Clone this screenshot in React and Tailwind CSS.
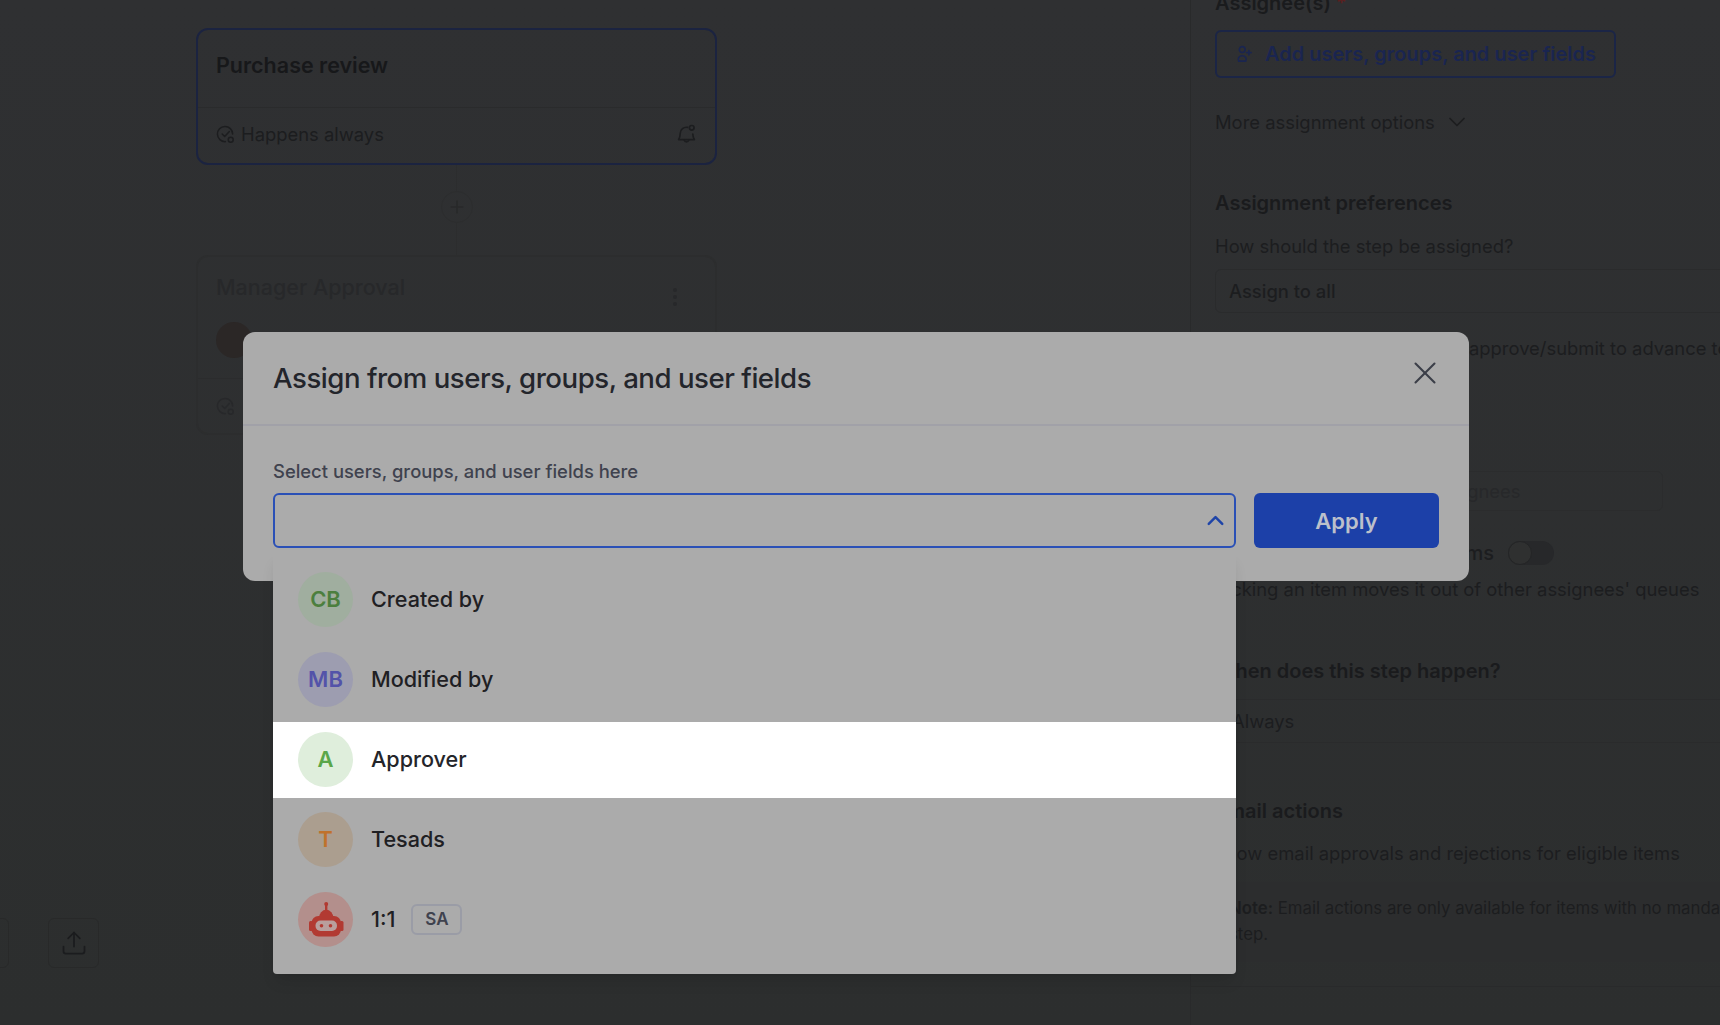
import { ChevronDown, ChevronUp, X, Plus, MoreVertical, Upload } from 'lucide-react';

const CheckDot = ({ className }) => (
  <svg viewBox="0 0 20 20" fill="none" stroke="currentColor" strokeWidth={1.6} strokeLinecap="round" strokeLinejoin="round" className={className}>
    <path d="M17.5 9.5a8 8 0 1 0-7.6 8" />
    <path d="M6.5 9.5l2.6 2.6 5-5.2" />
    <circle cx="15.5" cy="15.5" r="2.6" />
  </svg>
);

const BellDot = ({ className }) => (
  <svg viewBox="0 0 20 20" fill="none" stroke="currentColor" strokeWidth={1.6} strokeLinecap="round" strokeLinejoin="round" className={className}>
    <path d="M11 3.2A6 6 0 0 0 4 9c0 3-.8 4.6-1.5 5.8h15C16.8 13.6 16 12 16 9.5" />
    <path d="M7.8 15.5a2.4 2.4 0 0 0 4.4 0" />
    <circle cx="15" cy="3.6" r="2.2" />
  </svg>
);

const AddPerson = ({ className }) => (
  <svg viewBox="0 0 18 20" fill="none" stroke="currentColor" strokeWidth={1.8} strokeLinecap="round" className={className}>
    <circle cx="7" cy="5" r="3.3" />
    <path d="M3 18c-1.5-3 .5-6 4-6s5.5 3 4 6z" />
    <path d="M14.5 6v5M12 8.5h5" />
  </svg>
);

const Robot = ({ className }) => (
  <svg viewBox="0 0 36 36" className={className}>
    <rect x="17" y="3" width="2.4" height="7" fill="#b23a32" />
    <circle cx="18.2" cy="3" r="2" fill="#b23a32" />
    <path d="M11 17a7 8 0 0 1 14.4 0z" fill="#b23a32" />
    <rect x="3.5" y="15" width="29.5" height="20.5" rx="7" fill="#b23a32" />
    <rect x="1" y="20" width="4" height="10" rx="1.5" fill="#b23a32" />
    <rect x="31.5" y="20" width="4" height="10" rx="1.5" fill="#b23a32" />
    <rect x="7.5" y="19.5" width="21.5" height="10.5" rx="5" fill="#b99f9d" />
    <circle cx="13.5" cy="24.7" r="1.8" fill="#b23a32" />
    <circle cx="22.5" cy="24.7" r="1.8" fill="#b23a32" />
  </svg>
);

const options = [
  { name: 'Created by', initials: 'CB', circle: 'bg-[#a0ae9f] text-[#4c7f3e]', row: 'text-[#1f2023]' },
  { name: 'Modified by', initials: 'MB', circle: 'bg-[#9d9db0] text-[#5353a9]', row: 'text-[#1f2023]' },
  { name: 'Approver', initials: 'A', circle: 'bg-[#dfeedc] text-[#5aa64a]', row: 'bg-white text-[#24252a]' },
  { name: 'Tesads', initials: 'T', circle: 'bg-[#ab9e8f] text-[#c0722c]', row: 'text-[#1f2023]' },
];

const OptionRow = ({ item }) => (
  <div className={`flex h-[76px] items-center gap-[18px] pb-[2px] pl-[25px] ${item.row}`}>
    <div className={`flex h-[55px] w-[55px] items-center justify-center rounded-full text-[22px] font-semibold ${item.circle}`}>
      {item.initials}
    </div>
    <span className="text-[21.6px] font-medium">{item.name}</span>
  </div>
);

const Canvas = () => (
  <div className="relative flex-1 pl-[196px] pt-[28px]">
    {/* Steps */}
    <div className="w-[521px]">
      <div className="h-[137px] rounded-xl border-2 border-[#1b2340]">
        <div className="flex h-[77px] items-center px-[18px] pb-[6px] text-[21.5px] font-semibold leading-none text-[#17181a]">
          Purchase review
        </div>
        <div className="flex h-[56px] items-center justify-between border-t border-[#2a2b2c] px-[18px] pb-[2px] text-[18.4px] text-[#1c1d1f]">
          <div className="flex items-center gap-[6px]">
            <CheckDot className="h-[19px] w-[19px]" />
            Happens always
          </div>
          <BellDot className="h-[21px] w-[21px]" />
        </div>
      </div>

      <div className="flex h-[90px] flex-col items-center">
        <div className="h-[26px] w-px bg-[#2c2d2e]" />
        <div className="flex h-8 w-8 items-center justify-center rounded-full border border-[#2c2d2e] text-[#28292a]">
          <Plus className="h-5 w-5" />
        </div>
        <div className="w-px flex-1 bg-[#2c2d2e]" />
      </div>

      <div className="h-[180px] rounded-xl border-2 border-[#2c2d2e]">
        <div className="flex h-[62px] items-start justify-between pl-[18px] pr-[28px] pt-[16px] text-[21.5px] font-medium leading-[28px] text-[#27282a]">
          Manager Approval
          <MoreVertical className="mt-3 h-6 w-6 text-[#27282a]" />
        </div>
        <div className="flex h-[60px] items-center border-b border-[#2b2c2d] pb-[18px] pl-[18px]">
          <div className="h-9 w-9 rounded-full bg-[#2b2726]" />
        </div>
        <div className="flex h-[54px] items-center pl-[18px] text-[#27282a]">
          <CheckDot className="h-[19px] w-[19px]" />
        </div>
      </div>
    </div>

    {/* Toolbar */}
    <div className="absolute bottom-[57px] left-[-41px] flex items-center gap-[39px]">
      <div className="h-[50px] w-[50px] rounded-md border border-[#282929]" />
      <div className="flex h-[50px] w-[51px] items-center justify-center rounded-md border border-[#282929] text-[#1b1c1e]">
        <Upload className="h-7 w-7" strokeWidth={1.5} />
      </div>
    </div>
  </div>
);

const SidePanel = () => (
  <div className="h-[1025px] w-[530px] overflow-hidden border-l border-[#292a2b] pl-[24px] text-[18.4px] leading-[28px] text-[#1c1d1f]">
    <div className="-mt-[11px] text-[20px] font-semibold text-[#1a1b1d]">
      Assignee(s) <span className="text-[#5c1f1f]">*</span>
    </div>
    <div className="mt-[13px] flex h-[48px] w-[401px] items-center gap-[13px] rounded-md border-2 border-[#1b2546] pl-[19px] text-[20px] font-semibold text-[#1a2550]">
      <AddPerson className="h-[18px] w-[16px]" />
      Add users, groups, and user fields
    </div>
    <div className="mt-[30px] flex items-center gap-[8px]">
      More assignment options
      <ChevronDown className="h-7 w-7" strokeWidth={1.5} />
    </div>
    <div className="mt-[53px] text-[20px] font-semibold text-[#1a1b1d]">Assignment preferences</div>
    <div className="mt-[15px]">How should the step be assigned?</div>
    <div className="mt-[9px] flex h-[44px] w-[600px] items-center rounded-md border border-[#2a2b2c] pl-[13px] font-medium">
      Assign to all
    </div>
    <div className="mt-[21px] whitespace-nowrap">
      <span className="inline-block w-[254px]">Assignees in the step must</span>approve/submit to advance to the next step
    </div>
    <div className="mt-[109px] flex h-[40px] w-[448px] items-center rounded-md border border-[#2b2c2d] pl-[29px] text-[#27282a]">
      Maximum assignable assignees
    </div>
    <div className="mt-[28px] flex items-center gap-[14px]">
      <div className="w-[279px] whitespace-nowrap text-right text-[20px] font-medium">Allow users to pick up items</div>
      <div className="flex h-[24px] w-[46px] items-center rounded-full bg-[#27282a]">
        <div className="h-[24px] w-[24px] rounded-full border border-[#242526] bg-[#2f3030]" />
      </div>
    </div>
    <div className="mt-[8px] whitespace-nowrap">Picking an item moves it out of other assignees' queues</div>
    <div className="mt-[54px] text-[20px] font-semibold text-[#1a1b1d]">When does this step happen?</div>
    <div className="mt-[14px] flex h-[44px] items-center border-y border-[#2a2b2c] pl-[17px]">Always</div>
    <div className="mt-[54px] text-[20px] font-semibold text-[#1a1b1d]">Email actions</div>
    <div className="mt-[14px] whitespace-nowrap">Allow email approvals and rejections for eligible items</div>
    <div className="mt-[15px] h-[80px] w-[600px] whitespace-nowrap rounded-md bg-[#2c2d2e] pl-[14px] pt-[13px] text-[16.8px] leading-[26px]">
      <span className="font-semibold">Note:</span> Email actions are only available for items with no mandatory fields in this
      <br />
      step.
    </div>
    <div className="-ml-[24px] mt-[24px] border-t border-[#292a2b]" />
  </div>
);

const AssignModal = () => (
  <div className="absolute left-[243px] top-[332px] h-[249px] w-[1226px] rounded-xl bg-[#ababab]">
    <div className="flex h-[94px] items-start justify-between border-b-2 border-[#a1a1a8] pl-[30px] pr-[25px]">
      <h2 className="pt-[27px] text-[27.6px] font-medium leading-[38px] tracking-[-0.47px] text-[#23252b]">
        Assign from users, groups, and user fields
      </h2>
      <X className="mt-[22px] h-[38px] w-[38px] text-[#3b3e48]" strokeWidth={1.3} />
    </div>
    <div className="px-[30px] pt-[32px]">
      <div className="text-[18.4px] font-medium leading-[26px] text-[#3f424e]">Select users, groups, and user fields here</div>
      <div className="mt-[9px] flex gap-[18px]">
        <div className="relative flex-1">
          <div className="flex h-[55px] items-center justify-end rounded-md border-2 border-[#2a50b6] pr-[5px]">
            <ChevronUp className="h-[27px] w-[27px] text-[#1e44a8]" strokeWidth={2.2} />
          </div>
          <div className="absolute left-0 right-0 top-[60px] h-[421px] rounded-b bg-[#ababab] pt-[9px] shadow-lg">
            <div className="flex flex-col gap-[4px]">
              {options.map((item) => (
                <OptionRow key={item.name} item={item} />
              ))}
              <div className="flex h-[76px] items-center gap-[18px] pb-[2px] pl-[25px] text-[#1f2023]">
                <div className="flex h-[55px] w-[55px] items-center justify-center rounded-full bg-[#b38f8c]">
                  <Robot className="h-9 w-9" />
                </div>
                <span className="text-[21.6px] font-medium">1:1</span>
                <span className="-ml-[2px] mt-[1px] flex h-[31px] w-[51px] items-center justify-center rounded-md border-2 border-[#9a9ca6] text-[17px] font-semibold text-[#3f424e]">
                  SA
                </span>
              </div>
            </div>
          </div>
        </div>
        <button className="h-[55px] w-[185px] rounded-md bg-[#1c40a8] pt-[1px] text-[22px] font-semibold text-[#bcc0cb]">Apply</button>
      </div>
    </div>
  </div>
);

export default function App() {
  return (
    <div className="relative flex h-[1025px] w-[1720px] overflow-hidden bg-gradient-to-b from-[#2f3032] to-[#2c2e2e] font-[Inter,sans-serif]">
      <Canvas />
      <SidePanel />
      <AssignModal />
    </div>
  );
}
